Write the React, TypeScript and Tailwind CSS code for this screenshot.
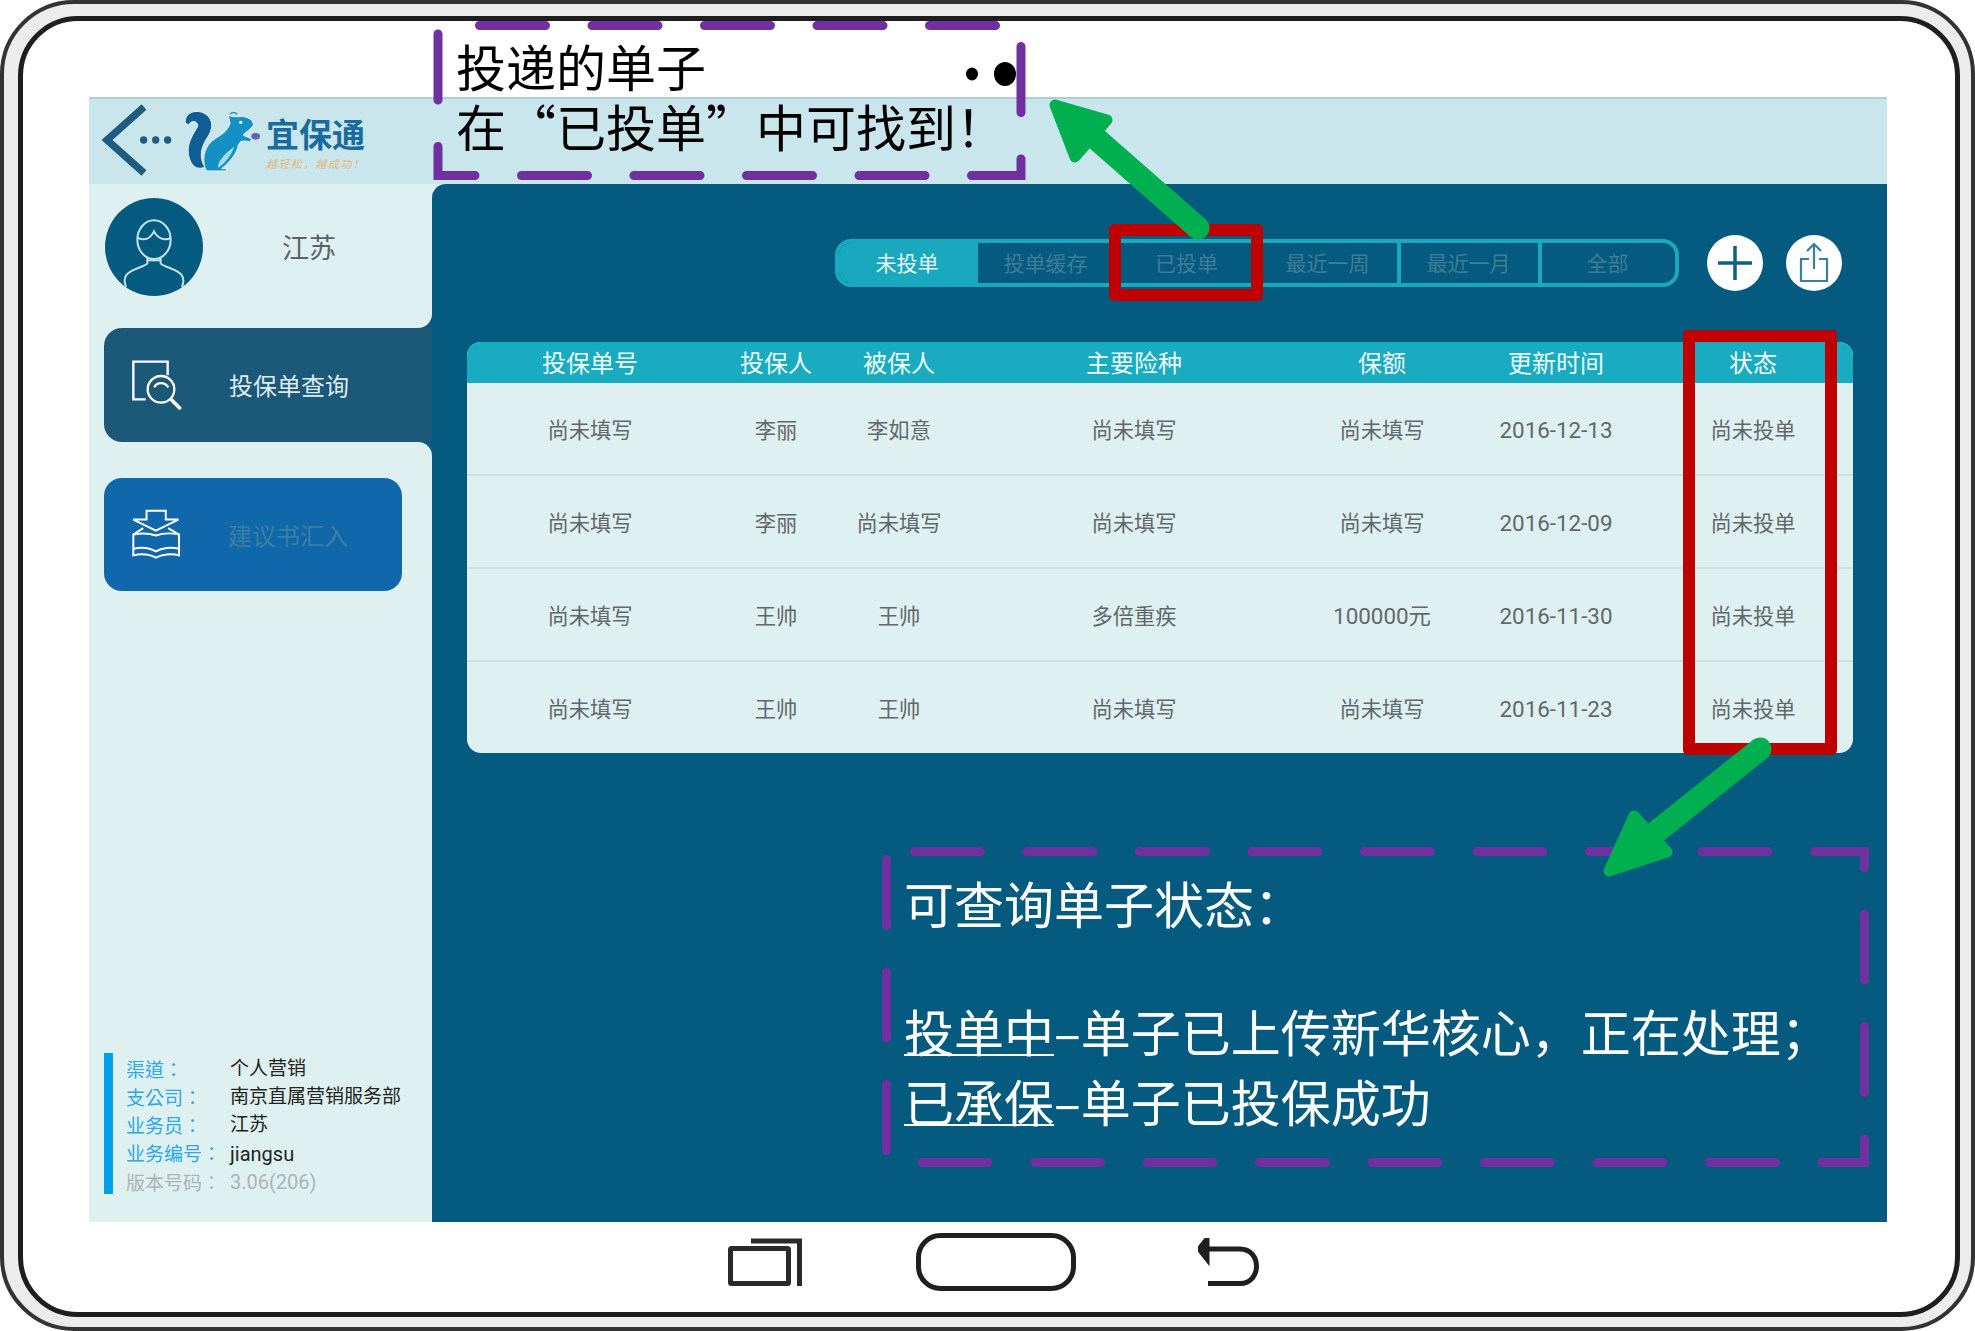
import React from "react";

const rows = [
  ["尚未填写", "李丽", "李如意", "尚未填写", "尚未填写", "2016-12-13", "尚未投单"],
  ["尚未填写", "李丽", "尚未填写", "尚未填写", "尚未填写", "2016-12-09", "尚未投单"],
  ["尚未填写", "王帅", "王帅", "多倍重疾", "100000元", "2016-11-30", "尚未投单"],
  ["尚未填写", "王帅", "王帅", "尚未填写", "尚未填写", "2016-11-23", "尚未投单"],
];
const headers = ["投保单号", "投保人", "被保人", "主要险种", "保额", "更新时间", "状态"];
const tabs = ["投单缓存", "已投单", "最近一周", "最近一月", "全部"];
const gridCols = "grid grid-cols-[246px_126px_120px_350px_146px_202px_192px]";

function Logo() {
  return (
    <svg width="172" height="86" viewBox="0 0 516 258" className="shrink-0" fill="none">
      <path d="M147 24 L36 123 L147 222" stroke="#1f5c80" strokeWidth="22" />
      <circle cx="146" cy="123" r="11" fill="#1f5c80" />
      <circle cx="182" cy="123" r="11" fill="#1f5c80" />
      <circle cx="218" cy="123" r="11" fill="#1f5c80" />
      <g transform="translate(-15 -6)">
        <path d="M285 75 C285 45 320 35 345 50 C370 65 372 95 350 125 C335 150 325 180 345 210 C320 222 300 205 295 170 C290 140 310 110 322 90 C328 75 305 65 295 85 Z" fill="#0f5f96" stroke="#e8f6fa" strokeWidth="3" />
        <path d="M345 212 C335 180 345 145 375 125 C395 112 410 105 420 80 L415 55 C430 60 440 60 455 58 C480 60 492 75 490 85 C480 100 465 105 460 115 L485 125 L480 135 C460 130 450 130 445 145 C440 170 420 195 395 215 L410 215 L410 222 L350 222 Z" fill="#1590c4" stroke="#e8f6fa" strokeWidth="3" />
        <path d="M432 150 C425 175 405 198 385 212 C378 205 400 170 432 150 Z" fill="#a8dcee" />
        <ellipse cx="497" cy="118" rx="13" ry="10" fill="#6b5fb0" />
        <circle cx="452" cy="76" r="5" fill="#ffffff" />
        <path d="M420 52 Q430 40 442 52" stroke="#1590c4" strokeWidth="4" />
      </g>
    </svg>
  );
}

function Avatar() {
  return (
    <svg width="98" height="98" viewBox="13 25 294 294" className="shrink-0" fill="none">
      <circle cx="160" cy="172" r="147" fill="#055a80" />
      <g stroke="#c5e2e9" strokeWidth="6">
        <ellipse cx="160" cy="150" rx="50" ry="58" />
        <path d="M112 145 C135 155 150 145 160 125 C170 145 190 155 210 145" />
        <path d="M140 205 L140 222 C130 232 92 238 78 255 C68 268 72 280 76 292" />
        <path d="M180 205 L180 222 C190 232 228 238 242 255 C252 268 248 280 244 292" />
        <path d="M140 212 H180" />
      </g>
    </svg>
  );
}

function SearchDoc() {
  return (
    <svg width="70" height="70" viewBox="0 0 210 210" className="shrink-0" fill="none" stroke="#ffffff" strokeWidth="7">
      <path d="M62 148 H25 V35 H128 V76" />
      <circle cx="108" cy="118" r="40" />
      <path d="M88 112 C95 95 120 95 130 112" />
      <path d="M140 150 L164 174" strokeWidth="11" strokeLinecap="round" />
    </svg>
  );
}

function BookIcon() {
  return (
    <svg width="53" height="53" viewBox="90 115 160 160" className="shrink-0" fill="none" stroke="#ffffff" strokeWidth="6">
      <path d="M140 123 H198 V150 H236 L168 183 L100 150 H140 Z" />
      <path d="M130 176 L100 195 V258 C125 252 150 255 168 265 C186 255 215 252 238 258 V195 L205 176" />
      <path d="M100 195 C125 190 150 192 168 198 C186 192 215 190 238 195" />
      <path d="M100 238 C125 232 150 235 168 246 C186 235 215 232 238 238" />
    </svg>
  );
}

function Info({ label, value, muted }: { label: string; value: string; muted?: boolean }) {
  return (
    <div className="flex h-[28.2px] items-center pt-[4px] text-[19px]">
      <span className={`w-[104px] font-['Noto_Sans_CJK_TC',sans-serif] ${muted ? "text-[#aab4b6]" : "text-[#2aa9e4]"}`}>{label}</span>
      <span className={`${/[a-z0-9]/.test(value) ? "text-[20px]" : ""} ${muted ? "text-[#aab4b6]" : "text-[#222222]"}`}>{value}</span>
    </div>
  );
}

function Sidebar() {
  return (
    <aside className="flex w-[343px] shrink-0 flex-col bg-[#055a80]">
      <div className="flex h-[144px] items-start rounded-br-[14px] bg-[#dff0f0] pl-[16px] pt-[14px]">
        <Avatar />
        <div className="ml-[79px] flex h-[98px] items-center pt-[4px] text-[27px] text-[#59636a]">江苏</div>
      </div>
      <div className="bg-[#dff0f0] pl-[15px]">
        <div className="flex h-[114px] items-center rounded-l-[18px] bg-[#1c5878] pl-[21px]">
          <SearchDoc />
          <span className="ml-[34px] pt-[4px] text-[24px] text-[#dcedf0]">投保单查询</span>
        </div>
      </div>
      <div className="flex flex-1 flex-col rounded-tr-[14px] bg-[#dff0f0] pb-[28px] pl-[15px] pt-[36px]">
        <div className="flex h-[113px] w-[298px] items-center rounded-[18px] bg-[#1068ab] pl-[26px]">
          <BookIcon />
          <span className="ml-[45px] pt-[4px] text-[24px] text-[#3c7fa2]">建议书汇入</span>
        </div>
        <div className="mt-auto h-[141px] border-l-[9px] border-[#00a0e9] pl-[13px]">
          <Info label="渠道：" value="个人营销" />
          <Info label="支公司：" value="南京直属营销服务部" />
          <Info label="业务员：" value="江苏" />
          <Info label="业务编号：" value="jiangsu" />
          <Info label="版本号码：" value="3.06(206)" muted />
        </div>
      </div>
    </aside>
  );
}

function Tabs() {
  return (
    <div className="flex h-[48px] w-[844px] overflow-hidden rounded-[16px] border-[4px] border-[#19a9bf] text-[21px] text-[#3f7d97]">
      <div className="flex w-[139px] items-center justify-center bg-[#19a9bf] pr-[3px] pt-[4px] text-[#e8f6f8]">未投单</div>
      {tabs.map((t, i) => (
        <div key={t} className={`flex items-center justify-center pr-[2px] pt-[4px] ${i < 4 ? "w-[141px] border-r-[4px] border-[#19a9bf]" : "flex-1"}`}>
          {t}
        </div>
      ))}
    </div>
  );
}

function Main() {
  return (
    <main className="flex flex-1 flex-col rounded-tl-[14px] bg-[#055a80] pl-[35px] pr-[34px] pt-[51px]">
      <div className="flex h-[56px] items-center justify-end pr-[11px]">
        <Tabs />
        <div className="ml-[28px] flex size-[56px] items-center justify-center rounded-full bg-white">
          <svg width="34" height="34" viewBox="0 0 34 34" fill="none" stroke="#0e5f82" strokeWidth="3.5">
            <path d="M0 17 H34 M17 0 V34" />
          </svg>
        </div>
        <div className="ml-[23px] flex size-[56px] items-center justify-center rounded-full bg-white">
          <svg width="32" height="42" viewBox="0 0 32 42" fill="none" stroke="#3a7f9f" strokeWidth="2.2">
            <path d="M16 27 V2 M9 9 L16 2 L23 9" />
            <path d="M11 17 H3 V39 H29 V17 H21" />
          </svg>
        </div>
      </div>
      <div className="mt-[51px] flex h-[411px] flex-col overflow-hidden rounded-[14px] bg-[#dff0f0]">
        <div className={`${gridCols} h-[41px] shrink-0 items-center bg-[#19acc0] pt-[3px] text-center text-[24px] text-[#eef9fa]`}>
          {headers.map((h) => (
            <div key={h}>{h}</div>
          ))}
        </div>
        {rows.map((r, i) => (
          <div key={i} className={`${gridCols} flex-1 items-center pt-[4px] text-center text-[21.3px] text-[#5f686e] ${i < 3 ? "border-b-2 border-[#cfdfe0]" : ""}`}>
            {r.map((c, j) => (
              <div key={j} className={j === 5 || c === "100000元" ? "text-[22.4px]" : ""}>{c}</div>
            ))}
          </div>
        ))}
      </div>
    </main>
  );
}

function NavBar() {
  return (
    <div className="flex flex-1 items-center pb-[10px] pl-[639px]">
      <svg width="74" height="48" viewBox="0 0 74 48" fill="none" stroke="#2a2a2a" strokeWidth="5">
        <rect x="2.5" y="10.5" width="58" height="35" rx="1" />
        <path d="M23 3 H71.5 V48" />
      </svg>
      <svg width="160" height="58" viewBox="0 0 160 58" fill="none" stroke="#1f1f1f" strokeWidth="5" className="ml-[114px]">
        <rect x="2.5" y="2.5" width="155" height="53" rx="22" />
      </svg>
      <svg width="64" height="48" viewBox="0 0 64 48" fill="none" stroke="#1f1f1f" strokeWidth="5" className="ml-[122px]">
        <path d="M6 11 H42 C64 11 64 45.5 42 45.5 H10" />
        <path d="M9 1 L1 11 L9 21 Z" fill="#1f1f1f" />
      </svg>
    </div>
  );
}

function Overlay() {
  const dash = { fill: "none", stroke: "#7030a0", strokeWidth: 9, strokeDasharray: "66 46.5", strokeLinecap: "round" as const };
  return (
    <svg className="pointer-events-none absolute left-0 top-0" width="1975" height="1331" viewBox="0 0 1975 1331">
      <path d="M438 25.5 H1021 V175.5 H438 V30" strokeDashoffset="-41.5" {...dash} />
      <path d="M886.5 1155 V857" strokeDashoffset="-4.5" {...dash} />
      <path d="M886.5 851.5 H1864.5 V1162.5 H886.5" strokeDashoffset="-28" {...dash} />
      <ellipse cx="972" cy="74" rx="6" ry="6.5" fill="#000" />
      <ellipse cx="1005" cy="74" rx="11" ry="12" fill="#000" />
      <g fill="#00b050" stroke="#00b050" strokeLinejoin="round" strokeLinecap="round">
        <polygon points="1055,105 1107,120 1075,157" strokeWidth="11" />
        <path d="M1092 135 L1198 228" strokeWidth="23" fill="none" />
        <polygon points="1609,871 1634,816 1667,852" strokeWidth="11" />
        <path d="M1760 749 L1645 841" strokeWidth="23" fill="none" />
      </g>
    </svg>
  );
}

export default function App() {
  return (
    <div className="relative h-[1331px] w-[1975px] overflow-hidden bg-white font-['Roboto','Noto_Sans_CJK_SC',sans-serif]">
      <div className="h-full rounded-[74px] border-[4px] border-[#333333] bg-[#ececec] pb-[10px] pl-[14px] pr-[11px] pt-[12px]">
        <div className="flex h-full flex-col rounded-[60px] border-[5px] border-[#1e1e1e] bg-white pl-[66px] pr-[68px] pt-[76px]">
          <div className="flex h-[1125px] shrink-0 flex-col">
            <header className="flex h-[87px] shrink-0 items-center border-t-2 border-[#b2cdd6] bg-[#c9e6ec] pl-[6px]">
              <Logo />
              <div className="ml-[-1px] flex flex-col items-start pt-[6px]">
                <span className="text-[33px] font-bold leading-[36px] text-[#1a6b9e]">宜保通</span>
                <span className="mt-[4px] text-[11px] italic leading-[14px] tracking-[1.4px] text-[#e3b678]">越轻松，越成功！</span>
              </div>
            </header>
            <div className="flex flex-1 bg-[#dff0f0]">
              <Sidebar />
              <Main />
            </div>
          </div>
          <NavBar />
        </div>
      </div>

      <div className="absolute left-[1109px] top-[224px] h-[77px] w-[154px] rounded-[5px] border-[12px] border-[#c00000]" />
      <div className="absolute left-[1683px] top-[330px] h-[425px] w-[154px] rounded-[5px] border-[12px] border-[#c00000]" />

      <Overlay />

      <div className="absolute left-[456px] top-[35px] font-['Noto_Sans_CJK_SC',sans-serif] text-[50px] leading-[60px] text-black">
        <p>投递的单子</p>
        <p>在“已投单”中可找到！</p>
      </div>
      <div className="absolute left-[904px] top-[867px] font-['Noto_Sans_CJK_SC',sans-serif] text-[50px] leading-[70px] text-white">
        <p>可查询单子状态：</p>
        <p className="mt-[58px]"><span className="underline decoration-2 underline-offset-[2px]">投单中</span>–单子已上传新华核心，正在处理；</p>
        <p><span className="underline decoration-2 underline-offset-[2px]">已承保</span>–单子已投保成功</p>
      </div>
    </div>
  );
}
